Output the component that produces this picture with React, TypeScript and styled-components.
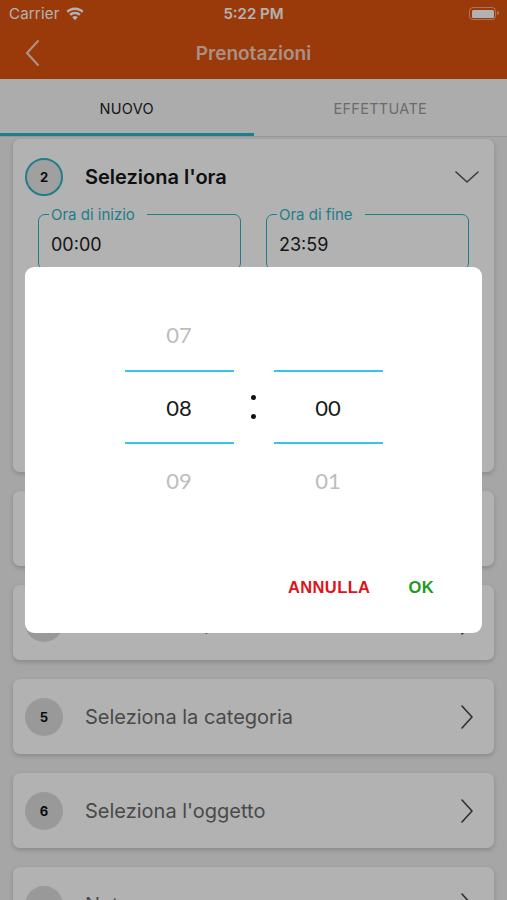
import React from 'react';
import styled, { createGlobalStyle } from 'styled-components';

const GlobalStyle = createGlobalStyle`
  html, body {
    margin: 0;
    padding: 0;
    background: #eeeeee;
    font-family: Inter, "Liberation Sans", Arial, sans-serif;
    overflow: hidden;
  }
  * { box-sizing: border-box; }
`;

const TEAL = '#2fb4c6';

const Screen = styled.div`
  width: 507px;
  height: 900px;
  position: relative;
  overflow: hidden;
  background: #eeeeee;
`;

const TopBar = styled.header`
  background: #dd5311;
  color: #fff;
`;

const StatusBar = styled.div`
  height: 27px;
  display: grid;
  grid-template-columns: 1fr auto 1fr;
  align-items: center;
  padding: 0 9px;
  font-size: 15px;
`;

const Carrier = styled.div`
  display: flex;
  align-items: center;
  gap: 6px;
  letter-spacing: 0.2px;
`;

const Clock = styled.div`
  font-weight: 600;
  font-size: 15px;
`;

const Battery = styled.div`
  justify-self: end;
  width: 27px;
  height: 13px;
  border: 1.5px solid rgba(255, 255, 255, 0.5);
  border-radius: 4px;
  padding: 1.5px;
  position: relative;
  margin-right: 2px;
  &::before {
    content: '';
    display: block;
    height: 100%;
    background: #fff;
    border-radius: 1.5px;
  }
  &::after {
    content: '';
    position: absolute;
    right: -4px;
    top: 3px;
    width: 2px;
    height: 4px;
    border-radius: 0 2px 2px 0;
    background: rgba(255, 255, 255, 0.5);
  }
`;

const NavBar = styled.div`
  height: 52px;
  display: flex;
  align-items: center;
  justify-content: center;
  position: relative;
`;

const BackButton = styled.button`
  position: absolute;
  left: 24px;
  top: 12px;
  background: none;
  border: none;
  padding: 0;
  display: flex;
`;

const NavTitle = styled.h1`
  margin: 0;
  font-size: 19px;
  font-weight: 600;
  color: rgba(255, 255, 255, 0.72);
`;

const Tabs = styled.nav`
  display: flex;
  background: #f7f7f7;
  border-bottom: 1px solid #d8d8d8;
`;

const Tab = styled.div<{ $active?: boolean }>`
  flex: 1;
  height: 57px;
  display: flex;
  align-items: center;
  justify-content: center;
  font-size: 14.5px;
  letter-spacing: 0.3px;
  color: ${(p) => (p.$active ? '#1c1c1c' : '#9a9a9a')};
  border-bottom: 3px solid ${(p) => (p.$active ? TEAL : 'transparent')};
  padding-top: 5px;
`;

const List = styled.div`
  display: flex;
  flex-direction: column;
  gap: 19px;
  padding: 2px 13px 0;
`;

const Card = styled.section<{ $tall?: boolean }>`
  background: #fff;
  border-radius: 7px;
  box-shadow: 0 2px 5px rgba(0, 0, 0, 0.18);
  height: ${(p) => (p.$tall ? '333px' : '75px')};
  padding: ${(p) => (p.$tall ? '19px 14px 0 12px' : '0 20px 0 12px')};
  flex-shrink: 0;
`;

const CardHead = styled.div<{ $tall?: boolean }>`
  display: flex;
  align-items: center;
  gap: 22px;
  height: ${(p) => (p.$tall ? '38px' : '75px')};
`;

const Badge = styled.div<{ $active?: boolean }>`
  width: 38px;
  height: 38px;
  border-radius: 50%;
  flex-shrink: 0;
  display: flex;
  align-items: center;
  justify-content: center;
  font-size: 13px;
  font-weight: 700;
  color: #111;
  background: ${(p) => (p.$active ? '#e6e6e6' : '#dcdcdc')};
  border: ${(p) => (p.$active ? `2px solid ${TEAL}` : 'none')};
`;

const CardTitle = styled.div<{ $active?: boolean }>`
  flex: 1;
  font-size: 20px;
  font-weight: ${(p) => (p.$active ? 600 : 400)};
  color: ${(p) => (p.$active ? '#161616' : '#6a6a6a')};
`;

const Fields = styled.div`
  display: grid;
  grid-template-columns: 1fr 1fr;
  gap: 25px;
  padding: 9px 11px 0 13px;
`;

const Field = styled.fieldset`
  margin: 0;
  border: 1.5px solid ${TEAL};
  border-radius: 7px;
  padding: 0 12px 14px;
  min-width: 0;
`;

const FieldLabel = styled.legend`
  font-size: 15px;
  color: ${TEAL};
  padding: 0 12px 0 2px;
  margin-left: -2px;
`;

const FieldValue = styled.div`
  font-size: 18px;
  color: #1e1e1e;
  padding-top: 10px;
`;

const Dim = styled.div`
  position: absolute;
  inset: 0;
  background: rgba(0, 0, 0, 0.3);
`;

const Dialog = styled.div`
  position: absolute;
  left: 25px;
  top: 267px;
  width: 457px;
  height: 366px;
  background: #fff;
  border-radius: 9px;
  padding-top: 31px;
  display: flex;
  flex-direction: column;
`;

const Picker = styled.div`
  display: flex;
  justify-content: center;
  align-items: center;
  gap: 17px;
`;

const Wheel = styled.div`
  width: 109px;
  display: flex;
  flex-direction: column;
`;

const WheelItem = styled.div<{ $selected?: boolean }>`
  height: ${(p) => (p.$selected ? '74px' : '72px')};
  display: flex;
  align-items: center;
  justify-content: center;
  font-family: Lato, "Noto Sans", sans-serif;
  font-size: 22px;
  color: ${(p) => (p.$selected ? '#1a1a1a' : '#bdbdbd')};
  border-top: ${(p) => (p.$selected ? '2px solid #35c6e3' : 'none')};
  border-bottom: ${(p) => (p.$selected ? '2px solid #35c6e3' : 'none')};
`;

const Colon = styled.div`
  width: 6px;
  display: flex;
  flex-direction: column;
  align-items: center;
  gap: 14px;
  &::before,
  &::after {
    content: '';
    width: 5px;
    height: 5px;
    border-radius: 50%;
    background: #111;
  }
`;

const Actions = styled.div`
  display: flex;
  justify-content: flex-end;
  gap: 38px;
  padding: 62px 48px 0 0;
`;

const ActionButton = styled.button<{ $tone: string }>`
  background: none;
  border: none;
  padding: 0;
  font-family: "Liberation Sans", Arial, sans-serif;
  font-weight: 700;
  font-size: 16.5px;
  letter-spacing: 0.4px;
  color: ${(p) => p.$tone};
`;

const ChevronDown = () => (
  <svg width="26" height="16" viewBox="0 0 26 16" fill="none">
    <path d="M2 3l11 10L24 3" stroke="#555" strokeWidth="1.6" strokeLinecap="round" strokeLinejoin="round" />
  </svg>
);

const ChevronRight = () => (
  <svg width="14" height="26" viewBox="0 0 14 26" fill="none">
    <path d="M2 2l10 11L2 24" stroke="#444" strokeWidth="1.6" strokeLinecap="round" strokeLinejoin="round" />
  </svg>
);

const BackChevron = () => (
  <svg width="16" height="28" viewBox="0 0 16 28" fill="none">
    <path d="M14 2L3 14l11 12" stroke="rgba(255,255,255,0.75)" strokeWidth="2" strokeLinecap="round" strokeLinejoin="round" />
  </svg>
);

const Wifi = () => (
  <svg width="18" height="14" viewBox="0 0 18 14">
    <path d="M9 0.5C5.6 0.5 2.6 1.8 0.4 3.9L2.1 5.7C3.9 4 6.3 3 9 3s5.1 1 6.9 2.7l1.7-1.8C15.4 1.8 12.4.5 9 .5z" fill="#fff" />
    <path d="M9 4.8c-2.2 0-4.2.8-5.7 2.2L5 8.8C6 7.8 7.4 7.2 9 7.2s3 .6 4 1.6l1.7-1.8C13.2 5.6 11.2 4.8 9 4.8z" fill="#fff" />
    <path d="M9 9.1c-1.1 0-2.1.4-2.8 1.1L9 13.3l2.8-3.1C11.1 9.5 10.1 9.1 9 9.1z" fill="#fff" />
  </svg>
);

const steps = [
  { n: 3, label: "Seleziona l'edificio" },
  { n: 4, label: 'Seleziona la posizione' },
  { n: 5, label: 'Seleziona la categoria' },
  { n: 6, label: "Seleziona l'oggetto" },
  { n: 7, label: 'Note' },
];

export default function App() {
  return (
    <Screen>
      <GlobalStyle />
      <TopBar>
        <StatusBar>
          <Carrier>
            Carrier <Wifi />
          </Carrier>
          <Clock>5:22 PM</Clock>
          <Battery />
        </StatusBar>
        <NavBar>
          <BackButton>
            <BackChevron />
          </BackButton>
          <NavTitle>Prenotazioni</NavTitle>
        </NavBar>
      </TopBar>

      <Tabs>
        <Tab $active>NUOVO</Tab>
        <Tab>EFFETTUATE</Tab>
      </Tabs>

      <List>
        <Card $tall>
          <CardHead $tall>
            <Badge $active>2</Badge>
            <CardTitle $active>Seleziona l'ora</CardTitle>
            <ChevronDown />
          </CardHead>
          <Fields>
            <Field>
              <FieldLabel>Ora di inizio</FieldLabel>
              <FieldValue>00:00</FieldValue>
            </Field>
            <Field>
              <FieldLabel>Ora di fine</FieldLabel>
              <FieldValue>23:59</FieldValue>
            </Field>
          </Fields>
        </Card>
        {steps.map((s) => (
          <Card key={s.n}>
            <CardHead>
              <Badge>{s.n}</Badge>
              <CardTitle>{s.label}</CardTitle>
              <ChevronRight />
            </CardHead>
          </Card>
        ))}
      </List>

      <Dim />
      <Dialog>
        <Picker>
          <Wheel>
            <WheelItem>07</WheelItem>
            <WheelItem $selected>08</WheelItem>
            <WheelItem>09</WheelItem>
          </Wheel>
          <Colon />
          <Wheel>
            <WheelItem />
            <WheelItem $selected>00</WheelItem>
            <WheelItem>01</WheelItem>
          </Wheel>
        </Picker>
        <Actions>
          <ActionButton $tone="#e0121a">ANNULLA</ActionButton>
          <ActionButton $tone="#1f9a1f">OK</ActionButton>
        </Actions>
      </Dialog>
    </Screen>
  );
}
